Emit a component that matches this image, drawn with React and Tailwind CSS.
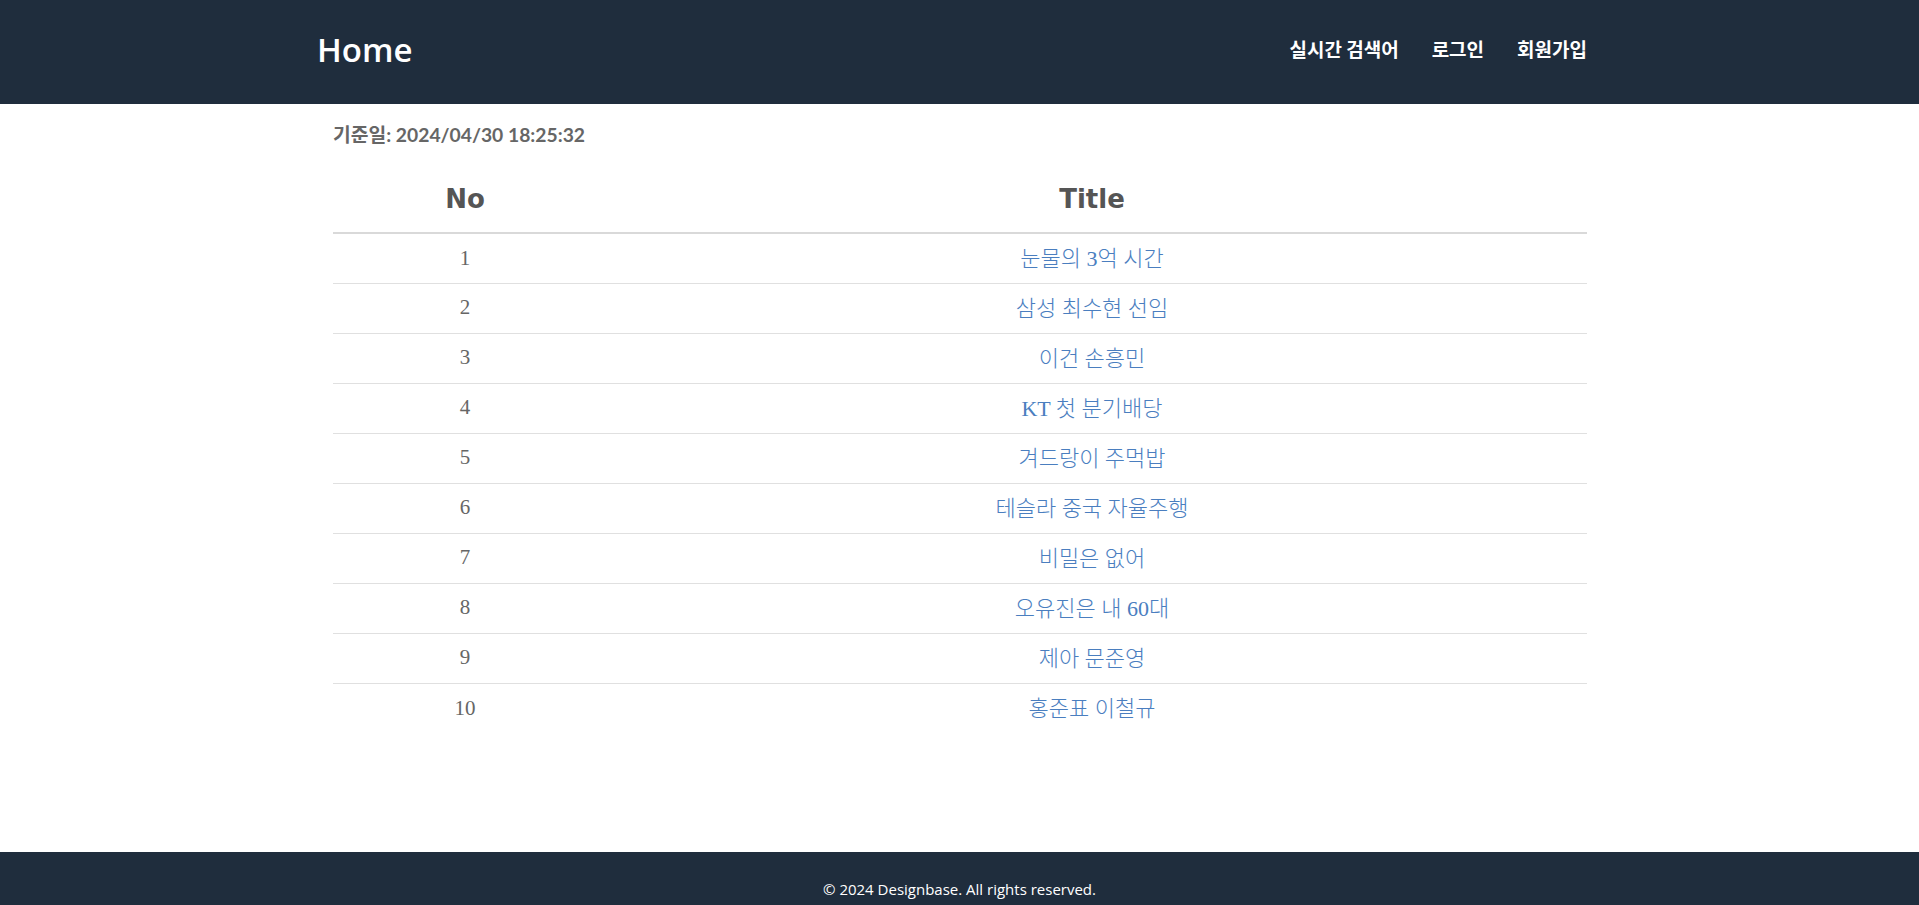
const rows = [
  '눈물의 3억 시간',
  '삼성 최수현 선임',
  '이건 손흥민',
  'KT 첫 분기배당',
  '겨드랑이 주먹밥',
  '테슬라 중국 자율주행',
  '비밀은 없어',
  '오유진은 내 60대',
  '제아 문준영',
  '홍준표 이철규',
]

export default function App() {
  return (
    <div className="min-h-screen bg-white">
      <header className="h-[104px] bg-[#1f2d3d]">
        <div className="ml-[317px] w-[1270px] h-full flex items-center justify-between">
          <a className="text-[33px] font-semibold text-white leading-none pb-[5px] [font-family:'Open_Sans','Noto_Sans_CJK_KR',sans-serif]">Home</a>
          <nav className="flex items-center gap-[33px] text-[19px] font-bold text-white [font-family:'Noto_Sans_CJK_KR',sans-serif] pb-[6px]">
            <a>실시간 검색어</a>
            <a>로그인</a>
            <a>회원가입</a>
          </nav>
        </div>
      </header>

      <main className="h-[748px]">
        <div className="ml-[317px] w-[1270px] pl-4 pt-[17px]">
          <p className="text-[19.3px] leading-[28px] font-bold text-[#666] [font-family:'Lato','Noto_Sans_CJK_KR',sans-serif]">
            기준일: 2024/04/30 18:25:32
          </p>
          <table className="mt-[17px] w-full border-collapse">
            <thead>
              <tr className="h-[67px] border-b-2 border-[#d9d9d9]">
                <th className="w-[264px] text-[26px] font-bold text-[#555] [font-family:'DejaVu_Sans','Noto_Sans_CJK_KR',sans-serif]">No</th>
                <th className="text-[26px] font-bold text-[#555] [font-family:'DejaVu_Sans','Noto_Sans_CJK_KR',sans-serif]">Title</th>
              </tr>
            </thead>
            <tbody className="text-[22px] [font-family:'Liberation_Serif','Noto_Sans_CJK_KR',serif]">
              {rows.map((title, i) => (
                <tr key={i} className={i < rows.length - 1 ? 'h-[50px] border-b border-[#e0e0e0]' : 'h-[50px]'}>
                  <td className="text-center text-[#666] text-[21px]">{i + 1}</td>
                  <td className="text-center text-[#4a7ebf] font-light">{title}</td>
                </tr>
              ))}
            </tbody>
          </table>
        </div>
      </main>

      <footer className="bg-[#1f2d3d] pt-[26px] pb-6">
        <p className="text-center text-[15px] text-white [font-family:'Open_Sans',sans-serif]">
          © 2024 Designbase. All rights reserved.
        </p>
      </footer>
    </div>
  )
}
